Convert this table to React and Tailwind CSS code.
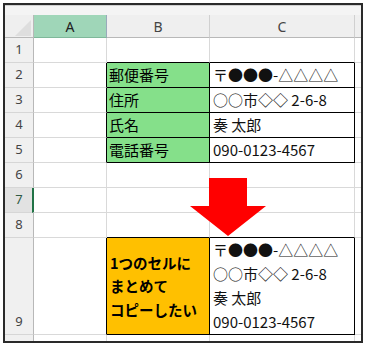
import React from "react";

const JP = { fontFamily: '"Noto Sans CJK JP", "Noto Sans", sans-serif' };
const UI = { fontFamily: '"Noto Sans", "Liberation Sans", sans-serif' };

const grid = "border-r border-b border-[#d9d9d9]";

function RowHead({ n, active, tall }) {
  return (
    <div
      style={UI}
      className={`flex justify-center border-r border-b border-r-[#b8b8b8] border-b-[#d6d6d6] text-[13px] ${
        tall ? "items-end pb-[3px]" : "items-center"
      } ${active ? "bg-[#e2e2e2] text-[#2f5a45]" : "bg-[#f0f0f0] text-[#444]"}`}
    >
      {n}
    </div>
  );
}

function Cell({ className = "", children, style }) {
  return (
    <div style={style} className={`flex items-center ${className}`}>
      {children}
    </div>
  );
}

const info = [
  ["郵便番号", "〒●●●-△△△△"],
  ["住所", "○○市◇◇ 2-6-8"],
  ["氏名", "奏 太郎"],
  ["電話番号", "090-0123-4567"],
];

export default function App() {
  return (
    <div className="relative w-[366px] h-[344px] bg-white">
      <div className="ml-[3px] mt-[3px] w-[360px] h-[340px] border-2 border-[#2a2a2a] bg-white overflow-hidden">
        <div className="grid grid-cols-[29px_73px_103px_145px_6px] grid-rows-[10px_23px_repeat(8,25px)_97px_6px]">
          {/* strip above the column headings */}
          <div className="col-span-5 bg-[#f4f4f4] border-t border-[#d0d0d0]" />

          {/* column headings */}
          <div className="relative bg-[#efefef] border-r border-b border-r-[#b8b8b8] border-b-[#b8b8b8]">
            <svg className="absolute left-[10px] top-[5px]" width="16" height="16" viewBox="0 0 16 16">
              <polygon points="16,0 16,16 0,16" fill="#dedede" />
            </svg>
          </div>
          <div style={UI} className="flex items-center justify-center bg-[#9fd6b8] border-r border-b border-r-[#9ab] border-b-[#7fb89a] text-[14px] text-[#222]">
            A
          </div>
          <div style={UI} className="flex items-center justify-center bg-[#efefef] border-r border-b border-r-[#d0d0d0] border-b-[#b8b8b8] text-[14px] text-[#444]">
            B
          </div>
          <div style={UI} className="flex items-center justify-center bg-[#efefef] border-r border-b border-r-[#d0d0d0] border-b-[#b8b8b8] text-[14px] text-[#444]">
            C
          </div>
          <div className="bg-[#efefef] border-b border-[#b8b8b8]" />

          {/* row 1 */}
          <RowHead n={1} />
          <Cell className={grid} />
          <Cell className="border-r border-b border-r-[#d9d9d9] border-b-black" />
          <Cell className="border-r border-b border-r-[#d9d9d9] border-b-black" />
          <Cell className="border-b border-[#d9d9d9]" />

          {/* rows 2-5: label table */}
          {info.map(([label, value], i) => (
            <React.Fragment key={label}>
              <RowHead n={i + 2} />
              <Cell className="border-r border-b border-r-black border-b-[#d9d9d9]" />
              <Cell style={JP} className="bg-[#85e08a] border-r border-b border-black pl-[2px] text-[15px] text-black">
                {label}
              </Cell>
              <Cell style={JP} className="border-r border-b border-black pl-[3px] text-[15px] text-[#111] whitespace-nowrap">
                {value}
              </Cell>
              <Cell className="border-b border-[#d9d9d9]" />
            </React.Fragment>
          ))}

          {/* rows 6-8 */}
          {[6, 7, 8].map((n) => (
            <React.Fragment key={n}>
              <RowHead n={n} active={n === 7} />
              <Cell className={`${grid} ${n === 7 ? "border-l-2 border-l-[#217346] -ml-[2px]" : ""}`} />
              <Cell className={`border-r border-b border-r-[#d9d9d9] ${n === 8 ? "border-b-black" : "border-b-[#d9d9d9]"}`} />
              <Cell className={`border-r border-b border-r-[#d9d9d9] ${n === 8 ? "border-b-black" : "border-b-[#d9d9d9]"}`} />
              <Cell className="border-b border-[#d9d9d9]" />
            </React.Fragment>
          ))}

          {/* row 9: merged text */}
          <RowHead n={9} tall />
          <Cell className="border-r border-b border-r-black border-b-[#d9d9d9]" />
          <div style={JP} className="flex flex-col justify-center bg-[#ffc000] border-r border-b border-black pl-[3px] text-[14.5px] font-bold leading-[23.5px] text-black">
            <span>1つのセルに</span>
            <span>まとめて</span>
            <span>コピーしたい</span>
          </div>
          <div style={JP} className="flex flex-col justify-end border-r border-b border-black pl-[3px] text-[15px] leading-[24px] text-[#111] whitespace-nowrap">
            {info.map(([, value]) => (
              <span key={value}>{value}</span>
            ))}
          </div>
          <Cell className="border-b border-[#d9d9d9]" />

          {/* below row 9 */}
          <div className="bg-[#f0f0f0] border-r border-[#b8b8b8]" />
          <div className="border-r border-[#d9d9d9]" />
          <div className="border-r border-[#d9d9d9]" />
          <div className="border-r border-[#d9d9d9]" />
          <div />
        </div>
      </div>

      {/* downward arrow */}
      <svg className="absolute left-[189px] top-[174px]" width="78" height="60" viewBox="0 0 78 60">
        <polygon points="20,1 58,1 58,29 77,29 39,59 1,29 20,29" fill="#ff0000" />
      </svg>
    </div>
  );
}
